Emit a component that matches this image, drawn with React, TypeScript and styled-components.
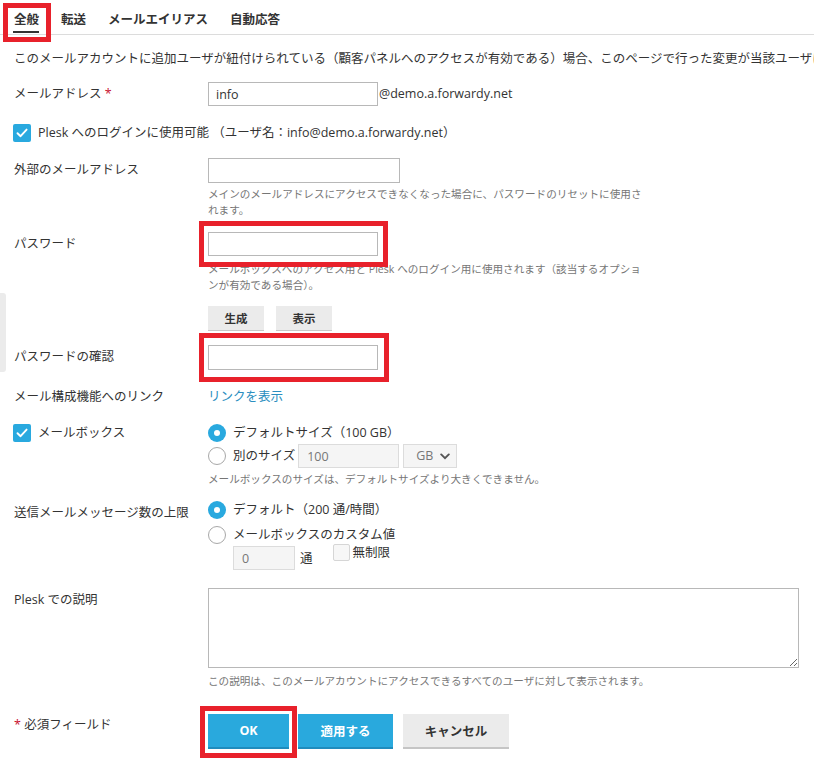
import React from "react";
import styled, { createGlobalStyle, css } from "styled-components";

const GlobalStyle = createGlobalStyle`
  html, body {
    margin: 0;
    padding: 0;
    background: #fff;
  }
  body {
    font-family: "Open Sans", "Noto Sans CJK JP", sans-serif;
    font-size: 12.5px;
    color: #333;
  }
`;

const Page = styled.div`
  position: relative;
  width: 814px;
  height: 763px;
  overflow: hidden;
`;

const SideHandle = styled.div`
  position: absolute;
  left: 0;
  top: 293px;
  width: 6px;
  height: 79px;
  background: #ebebeb;
  border-radius: 0 3px 3px 0;
`;

/* red annotation frame drawn over a wrapped element */
interface MarkProps {
  t: number;
  r: number;
  b: number;
  l: number;
}

const Mark = styled.div<MarkProps>`
  position: relative;
  display: inline-block;

  &::after {
    content: "";
    position: absolute;
    top: ${(p) => -p.t}px;
    right: ${(p) => -p.r}px;
    bottom: ${(p) => -p.b}px;
    left: ${(p) => -p.l}px;
    border: 5px solid #e8212b;
    pointer-events: none;
  }
`;

const TabBar = styled.div`
  display: flex;
  gap: 22px;
  height: 34px;
  padding-left: 14px;
  border-bottom: 1px solid #dcdcdc;
`;

const Tab = styled.div<{ active?: boolean }>`
  position: relative;
  height: 34px;
  box-sizing: border-box;
  padding-top: 11px;
  font-size: 12.5px;
  line-height: 18px;
  font-weight: bold;
  color: #333;
  white-space: nowrap;

  ${(p) =>
    p.active &&
    css`
      &::before {
        content: "";
        position: absolute;
        left: -1px;
        right: 0;
        bottom: 1px;
        height: 2px;
        background: #333;
      }
    `}
`;

const Content = styled.div`
  padding: 0 0 0 14px;
`;

const Intro = styled.div`
  margin-top: 15px;
  line-height: 18px;
  white-space: nowrap;
  overflow: hidden;
`;

const Row = styled.div<{ mt: number }>`
  display: grid;
  grid-template-columns: 194px 1fr;
  margin-top: ${(p) => p.mt}px;
`;

const Label = styled.div<{ pt?: number }>`
  padding-top: ${(p) => (p.pt ?? 3)}px;
  line-height: 18px;
  white-space: nowrap;
`;

const Star = styled.span`
  color: #c8102e;
`;

const Field = styled.div`
  display: flex;
  flex-direction: column;
  align-items: flex-start;
`;

const InlineField = styled.div`
  display: flex;
  align-items: center;
`;

const TextInput = styled.input<{ w: number; h?: number }>`
  box-sizing: border-box;
  width: ${(p) => p.w}px;
  height: ${(p) => p.h ?? 24}px;
  margin: 0;
  padding: 0 7px;
  border: 1px solid #b8b8b8;
  border-radius: 0;
  font: inherit;
  font-size: 12.5px;
  color: #333;
  background: #fff;
  outline: none;
`;

const DisabledInput = styled(TextInput)`
  border-color: #dcdcdc;
  background: #f5f5f5;
  color: #777;
  padding-left: 8px;
`;

const Suffix = styled.span`
  margin-left: 1px;
  line-height: 18px;
`;

const Help = styled.div<{ mt: number; maxw?: number }>`
  margin-top: ${(p) => p.mt}px;
  max-width: ${(p) => (p.maxw ? `${p.maxw}px` : "none")};
  font-size: 10.6px;
  line-height: 16px;
  color: #767676;
`;

const CheckLine = styled.div`
  display: flex;
  align-items: center;
  gap: 7px;
  margin-left: -1px;
  height: 22px;
  line-height: 18px;
  white-space: nowrap;
`;

const Box = styled.span<{ checked?: boolean }>`
  display: inline-flex;
  align-items: center;
  justify-content: center;
  flex: none;
  box-sizing: border-box;
  width: 18px;
  height: 18px;
  border-radius: 2px;
  ${(p) =>
    p.checked
      ? css`
          background: #29a9df;
        `
      : css`
          width: 17px;
          height: 17px;
          background: #f7f7f7;
          border: 1px solid #d6d6d6;
        `}
`;

const Tick = () => (
  <svg width="12" height="10" viewBox="0 0 12 10">
    <path d="M1.5 5.2 L4.6 8.2 L10.6 1.6" fill="none" stroke="#fff" strokeWidth="1.9" strokeLinecap="round" strokeLinejoin="round" />
  </svg>
);

const RadioGroup = styled.div<{ gap: number }>`
  display: flex;
  flex-direction: column;
  gap: ${(p) => p.gap}px;
`;

const RadioLine = styled.div<{ h?: number }>`
  display: flex;
  align-items: center;
  gap: 7px;
  height: ${(p) => p.h ?? 22}px;
  line-height: 18px;
  white-space: nowrap;
`;

const Radio = styled.span<{ checked?: boolean }>`
  display: inline-flex;
  align-items: center;
  justify-content: center;
  flex: none;
  box-sizing: border-box;
  width: 18px;
  height: 18px;
  border-radius: 50%;
  ${(p) =>
    p.checked
      ? css`
          background: #29a9df;
          &::after {
            content: "";
            width: 6px;
            height: 6px;
            border-radius: 50%;
            background: #fff;
          }
        `
      : css`
          background: #fff;
          border: 1px solid #a8a8a8;
        `}
`;

const SizeInput = styled(DisabledInput)`
  margin-left: -4px;
`;

const Select = styled.div`
  box-sizing: border-box;
  display: flex;
  align-items: center;
  justify-content: space-between;
  width: 54px;
  height: 24px;
  margin-left: -3px;
  padding: 0 6px 0 12px;
  border: 1px solid #dcdcdc;
  background: #f5f5f5;
  color: #777;
`;

const Chevron = () => (
  <svg width="10" height="7" viewBox="0 0 10 7">
    <path d="M1.2 1.4 L5 5.2 L8.8 1.4" fill="none" stroke="#555" strokeWidth="1.9" strokeLinecap="round" />
  </svg>
);

const CustomLine = styled.div`
  display: flex;
  align-items: flex-start;
  padding-left: 25px;
`;

const Unit = styled.span`
  margin-left: 5px;
  line-height: 24px;
  padding-top: 1px;
`;

const Unlimited = styled.label`
  display: flex;
  align-items: flex-start;
  gap: 3px;
  margin-left: 20px;
  margin-top: -2px;
  line-height: 17px;
`;

const Link = styled.a`
  color: #2a8ec0;
  text-decoration: none;
  line-height: 18px;
`;

const TextArea = styled.textarea`
  box-sizing: border-box;
  width: 591px;
  height: 80px;
  margin: 0;
  border: 1px solid #b8b8b8;
  font: inherit;
  display: block;
`;

const SmallButtons = styled.div`
  display: flex;
  gap: 12px;
  margin-top: 13px;
`;

const SmallButton = styled.button`
  box-sizing: border-box;
  width: 56px;
  height: 25px;
  padding: 0;
  border: none;
  border-bottom: 1px solid #c8c8c8;
  background: #ebebeb;
  font-family: inherit;
  font-size: 11.5px;
  font-weight: bold;
  color: #333;
`;

const Actions = styled.div`
  display: flex;
  gap: 9px;
`;

const ActionButton = styled.button<{ w: number; primary?: boolean }>`
  box-sizing: border-box;
  width: ${(p) => p.w}px;
  height: 35px;
  padding: 0;
  border: none;
  font-family: inherit;
  font-size: 12.5px;
  font-weight: bold;
  ${(p) =>
    p.primary
      ? css`
          background: #29a9dd;
          border-bottom: 2px solid #1f8cbd;
          color: #fff;
        `
      : css`
          background: #ebebeb;
          border-bottom: 2px solid #c5c5c5;
          color: #333;
        `}
`;

const CancelButton = styled(ActionButton)`
  margin-left: 1px;
`;

export default function App() {
  return (
    <Page>
      <GlobalStyle />
      <TabBar>
        <Mark t={-3} r={12} b={8} l={11}>
          <Tab active>全般</Tab>
        </Mark>
        <Tab>転送</Tab>
        <Tab>メールエイリアス</Tab>
        <Tab>自動応答</Tab>
      </TabBar>

      <Content>
        <Intro>
          このメールアカウントに追加ユーザが紐付けられている（顧客パネルへのアクセスが有効である）場合、このページで行った変更が当該ユーザにも適用されます。
        </Intro>

        <Row mt={14}>
          <Label>
            メールアドレス <Star>*</Star>
          </Label>
          <InlineField>
            <TextInput w={170} defaultValue="info" />
            <Suffix>@demo.a.forwardy.net</Suffix>
          </InlineField>
        </Row>

        <Row mt={18}>
          <CheckLine style={{ gridColumn: "1 / 3", height: 18 }}>
            <Box checked>
              <Tick />
            </Box>
            Plesk へのログインに使用可能 （ユーザ名：info@demo.a.forwardy.net）
          </CheckLine>
        </Row>

        <Row mt={16}>
          <Label>外部のメールアドレス</Label>
          <Field>
            <TextInput w={192} h={25} />
            <Help mt={3} maxw={442}>
              メインのメールアドレスにアクセスできなくなった場合に、パスワードのリセットに使用されます。
            </Help>
          </Field>
        </Row>

        <Row mt={14}>
          <Label>パスワード</Label>
          <Field>
            <Mark t={11} r={10} b={11} l={9}>
              <TextInput w={170} type="password" style={{ display: "block" }} />
            </Mark>
            <Help mt={5} maxw={442}>
              メールボックスへのアクセス用と Plesk へのログイン用に使用されます（該当するオプションが有効である場合）。
            </Help>
            <SmallButtons>
              <SmallButton>生成</SmallButton>
              <SmallButton>表示</SmallButton>
            </SmallButtons>
          </Field>
        </Row>

        <Row mt={14}>
          <Label>パスワードの確認</Label>
          <Field>
            <Mark t={12} r={11} b={12} l={9}>
              <TextInput w={170} h={25} type="password" style={{ display: "block" }} />
            </Mark>
          </Field>
        </Row>

        <Row mt={18}>
          <Label pt={0}>メール構成機能へのリンク</Label>
          <Field>
            <Link href="#">リンクを表示</Link>
          </Field>
        </Row>

        <Row mt={16}>
          <Label pt={0}>
            <CheckLine>
              <Box checked>
                <Tick />
              </Box>
              メールボックス
            </CheckLine>
          </Label>
          <Field>
            <RadioGroup gap={0}>
              <RadioLine>
                <Radio checked />
                デフォルトサイズ（100 GB）
              </RadioLine>
              <RadioLine h={24}>
                <Radio />
                別のサイズ
                <SizeInput w={101} defaultValue="100" disabled />
                <Select>
                  GB
                  <Chevron />
                </Select>
              </RadioLine>
            </RadioGroup>
            <Help mt={3}>
              メールボックスのサイズは、デフォルトサイズより大きくできません。
            </Help>
          </Field>
        </Row>

        <Row mt={12}>
          <Label pt={5}>送信メールメッセージ数の上限</Label>
          <Field>
            <RadioGroup gap={3}>
              <RadioLine>
                <Radio checked />
                デフォルト（200 通/時間）
              </RadioLine>
              <RadioLine>
                <Radio />
                メールボックスのカスタム値
              </RadioLine>
            </RadioGroup>
            <CustomLine>
              <DisabledInput w={62} defaultValue="0" disabled />
              <Unit>通</Unit>
              <Unlimited>
                <Box />
                無制限
              </Unlimited>
            </CustomLine>
          </Field>
        </Row>

        <Row mt={17}>
          <Label>Plesk での説明</Label>
          <Field>
            <TextArea />
            <Help mt={5}>
              この説明は、このメールアカウントにアクセスできるすべてのユーザに対して表示されます。
            </Help>
          </Field>
        </Row>

        <Row mt={25}>
          <Label pt={2}>
            <Star>*</Star> 必須フィールド
          </Label>
          <Actions>
            <Mark t={8} r={8} b={9} l={8}>
              <ActionButton w={81} primary style={{ display: "block" }}>
                OK
              </ActionButton>
            </Mark>
            <ActionButton w={95} primary>
              適用する
            </ActionButton>
            <CancelButton w={106}>キャンセル</CancelButton>
          </Actions>
        </Row>
      </Content>

      <SideHandle />
    </Page>
  );
}
